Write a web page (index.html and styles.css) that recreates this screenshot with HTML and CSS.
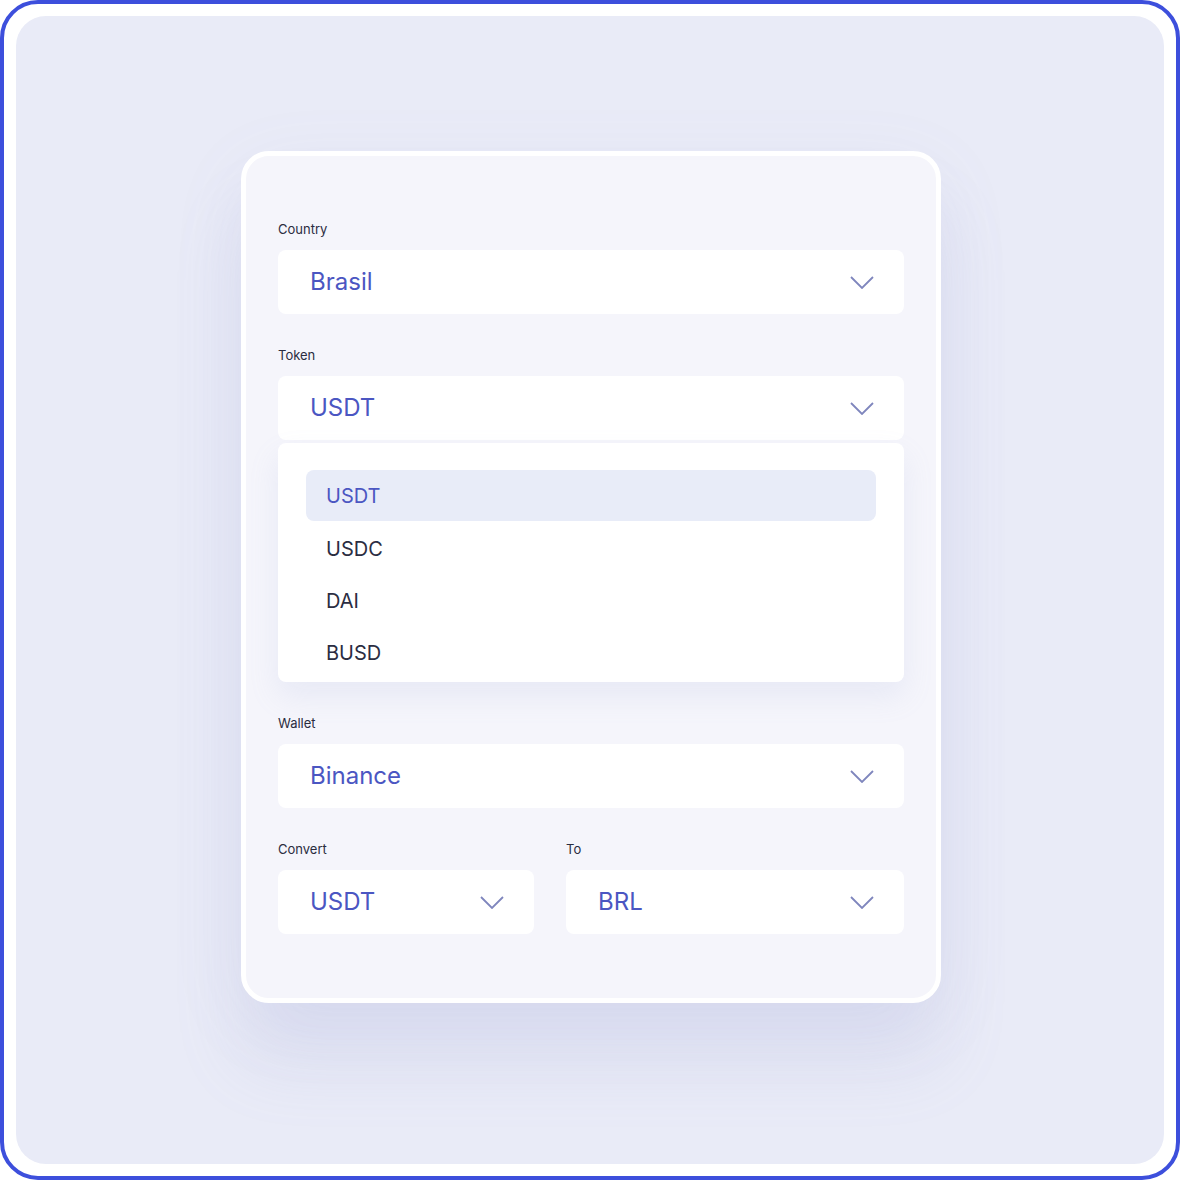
FILE: index.html
```html
<!DOCTYPE html>
<html lang="en">
  <head>
    <meta charset="UTF-8" />
    <meta name="viewport" content="width=device-width, initial-scale=1.0" />
    <title>Token select</title>
    <link rel="stylesheet" href="styles.css">
  </head>
  <body>
    <div class="frame">
      <div class="panel">
        <form class="card">
          <div class="field">
            <label class="label">Country</label>
            <div class="select">
              <span>Brasil</span>
              <svg class="chevron" viewBox="0 0 24 13"><path d="M1 1l11 11L23 1" /></svg>
            </div>
          </div>

          <div class="field field-open">
            <label class="label">Token</label>
            <div class="select">
              <span>USDT</span>
              <svg class="chevron" viewBox="0 0 24 13"><path d="M1 1l11 11L23 1" /></svg>
            </div>
            <ul class="menu">
              <li class="option active">USDT</li>
              <li class="option">USDC</li>
              <li class="option">DAI</li>
              <li class="option">BUSD</li>
            </ul>
          </div>

          <div class="field">
            <label class="label">Wallet</label>
            <div class="select">
              <span>Binance</span>
              <svg class="chevron" viewBox="0 0 24 13"><path d="M1 1l11 11L23 1" /></svg>
            </div>
          </div>

          <div class="row">
            <div class="field">
              <label class="label">Convert</label>
              <div class="select">
                <span>USDT</span>
                <svg class="chevron" viewBox="0 0 24 13"><path d="M1 1l11 11L23 1" /></svg>
              </div>
            </div>
            <div class="field">
              <label class="label">To</label>
              <div class="select">
                <span>BRL</span>
                <svg class="chevron" viewBox="0 0 24 13"><path d="M1 1l11 11L23 1" /></svg>
              </div>
            </div>
          </div>
        </form>
      </div>
    </div>
  </body>
</html>
```

FILE: styles.css
```css
* {
  box-sizing: border-box;
}
body {
  margin: 0;
  background-color: #ffffff;
  font-family: Inter, "Noto Sans", sans-serif;
}
.frame {
  width: 1180px;
  height: 1180px;
  border: 4px solid #3d4fdc;
  border-radius: 38px;
  padding: 12px;
  background-color: #ffffff;
}
.panel {
  height: 100%;
  border-radius: 30px;
  background-color: #e9ebf7;
  display: flex;
  justify-content: center;
  align-items: flex-start;
  padding-top: 135px;
  overflow: hidden;
}
.card {
  width: 700px;
  margin: 0 0 0 2px;
  background-color: #f5f5fb;
  border: 5px solid #ffffff;
  border-radius: 28px;
  padding: 65px 32px 64px;
  display: flex;
  flex-direction: column;
  gap: 33px;
  box-shadow: 0 60px 70px rgba(140, 148, 205, 0.14), 0 20px 80px rgba(140, 148, 205, 0.07);
}
.field {
  display: flex;
  flex-direction: column;
}
.label {
  display: block;
  font-size: 13px;
  line-height: 16px;
  color: #2a2c40;
  margin-bottom: 13px;
}
.select {
  height: 64px;
  background-color: #ffffff;
  border-radius: 8px;
  padding: 0 30px 2px 32px;
  display: flex;
  align-items: center;
  justify-content: space-between;
  font-size: 24px;
  color: #4b56c2;
}
.chevron {
  width: 24px;
  height: 13px;
  margin-top: 2px;
  fill: none;
  stroke: #7f86bd;
  stroke-width: 1.8;
}
.menu {
  list-style: none;
  margin: 3px 0 0;
  padding: 27px 28px 4px;
  background-color: #ffffff;
  border-radius: 8px;
  box-shadow: 0 14px 30px rgba(150, 160, 215, 0.14);
}
.option {
  height: 52px;
  display: flex;
  align-items: center;
  padding: 1px 0 0 20px;
  font-size: 20px;
  color: #2b2d42;
  border-radius: 8px;
}
.option.active {
  height: 51px;
  margin-bottom: 1px;
  background-color: #e8ecf8;
  color: #4b56c2;
}
.row {
  display: grid;
  grid-template-columns: 256px 1fr;
  gap: 32px;
}
```
